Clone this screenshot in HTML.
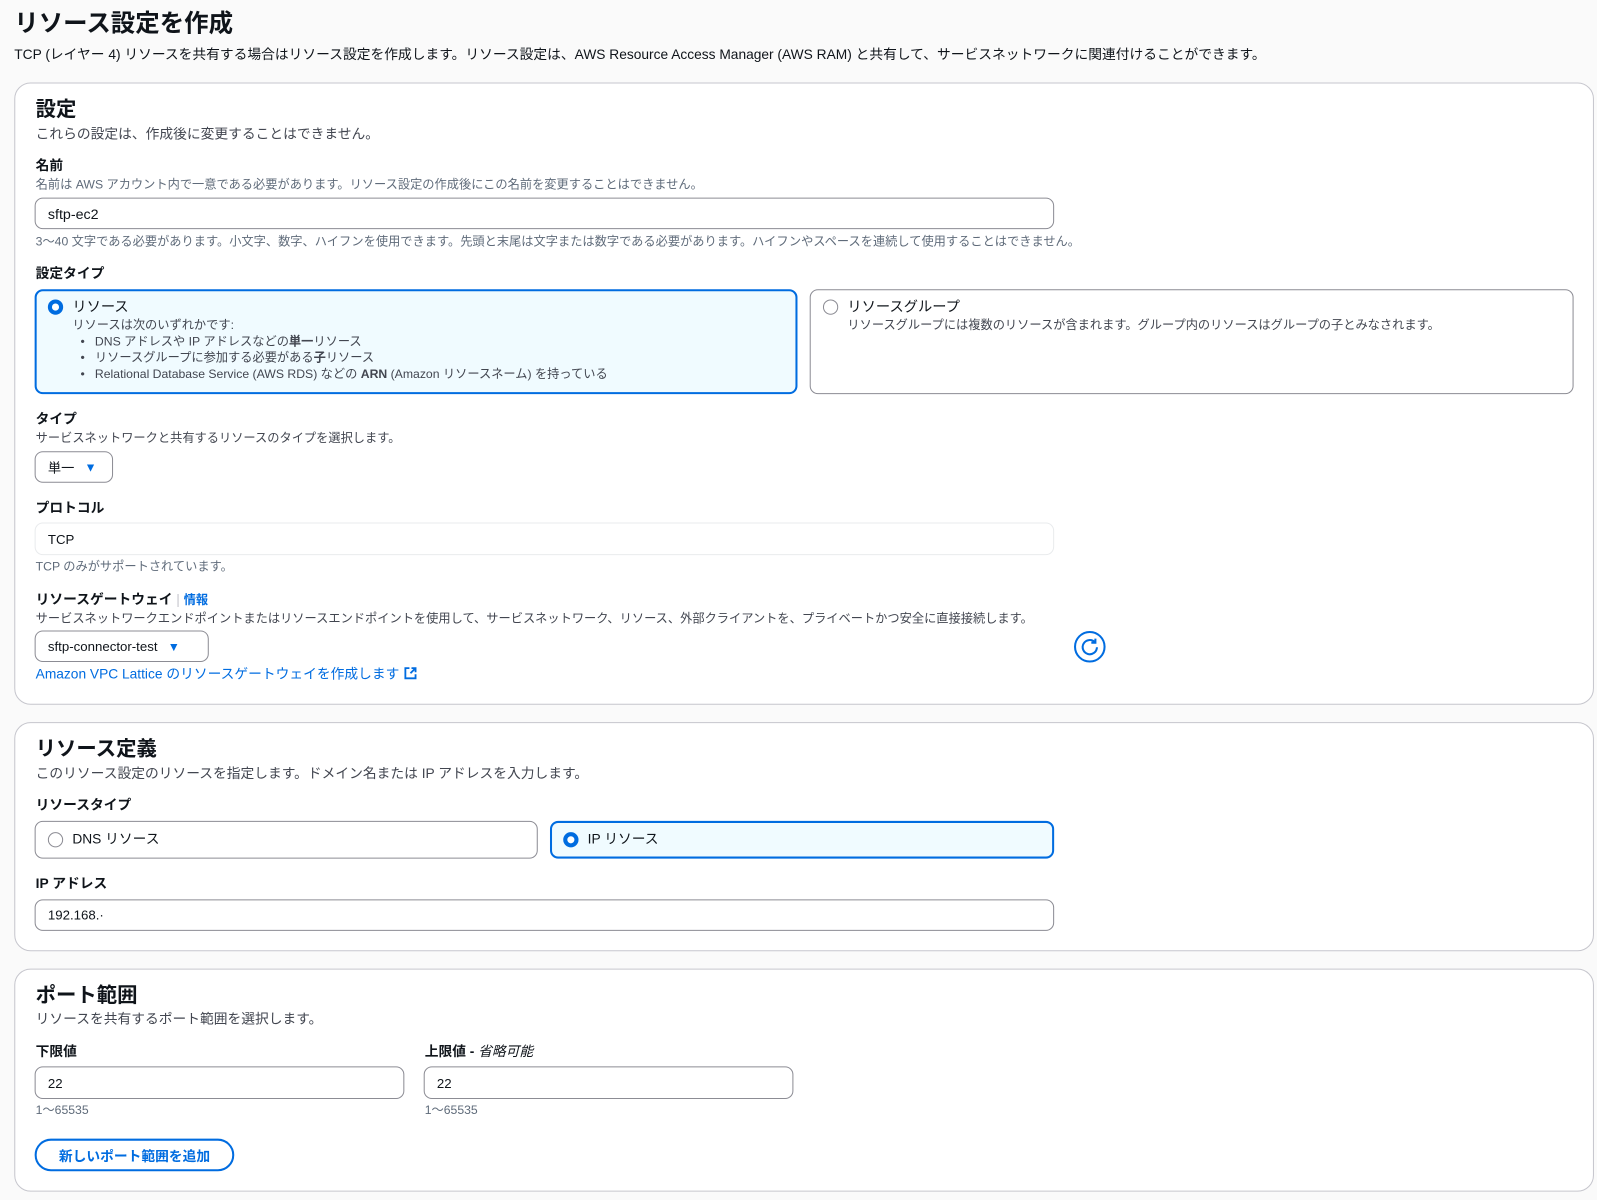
<!DOCTYPE html>
<html><head><meta charset="utf-8"><style>
*{box-sizing:border-box;margin:0;padding:0}
body{width:1597px;height:1199px;background:#fafafa;font-family:"Liberation Sans","Noto Sans CJK JP",sans-serif;color:#0f141a;position:relative;overflow:hidden}
#w{position:absolute;left:0;top:0;width:1568px;height:1178px;transform:scale(1.0185);transform-origin:0 0}
.t{position:absolute;white-space:nowrap;line-height:1.2}
.card{position:absolute;left:14px;width:1551px;background:#fff;border:1px solid #c6c6cd;border-radius:16px}
.h1{font-size:24px;font-weight:bold}
.h2{font-size:20px;font-weight:bold}
.lbl{font-size:13.5px;font-weight:bold}
.d{font-size:13.5px;color:#424650}
.s{font-size:12px;color:#5f6b7a}
.in{position:absolute;background:#fff;border:1px solid #8c8c94;border-radius:8px;font-size:14px;padding-left:12px;display:flex;align-items:center}
.box{position:absolute;border:1px solid #8c8c94;border-radius:8px;background:#fff}
.sel{border:2px solid #006ce0;background:#f0fbff}
.rad{position:absolute;width:15px;height:15px;border-radius:50%;border:1.5px solid #8c8c94;background:#fff}
.rad.on{border:4.5px solid #006ce0}
.blue{color:#006ce0}
</style></head><body><div id="w">
<div class="t h1" style="left:14px;top:10px">リソース設定を作成</div>
<div class="t" style="left:14px;top:46px;font-size:13.5px">TCP (レイヤー 4) リソースを共有する場合はリソース設定を作成します。リソース設定は、AWS Resource Access Manager (AWS RAM) と共有して、サービスネットワークに関連付けることができます。</div>

<div class="card" style="top:81px;height:611px"></div>
<div class="t h2" style="left:35px;top:96px">設定</div>
<div class="t d" style="left:35px;top:124px">これらの設定は、作成後に変更することはできません。</div>
<div class="t lbl" style="left:35px;top:155px">名前</div>
<div class="t s" style="left:35px;top:174px">名前は AWS アカウント内で一意である必要があります。リソース設定の作成後にこの名前を変更することはできません。</div>
<div class="in" style="left:34px;top:194px;width:1001px;height:31px">sftp-ec2</div>
<div class="t s" style="left:35px;top:230px">3〜40 文字である必要があります。小文字、数字、ハイフンを使用できます。先頭と末尾は文字または数字である必要があります。ハイフンやスペースを連続して使用することはできません。</div>
<div class="t lbl" style="left:35px;top:261px">設定タイプ</div>
<div class="box sel" style="left:34px;top:284px;width:749px;height:103px"></div>
<div class="rad on" style="left:47px;top:294px"></div>
<div class="t" style="left:71px;top:293px;font-size:14px">リソース</div>
<div class="t s" style="left:71px;top:312px;color:#424650">リソースは次のいずれかです:</div>
<div class="t s" style="left:79px;top:328px;color:#424650">•&nbsp;&nbsp;&nbsp;DNS アドレスや IP アドレスなどの<b>単一</b>リソース</div>
<div class="t s" style="left:79px;top:344px;color:#424650">•&nbsp;&nbsp;&nbsp;リソースグループに参加する必要がある<b>子</b>リソース</div>
<div class="t s" style="left:79px;top:360px;color:#424650">•&nbsp;&nbsp;&nbsp;Relational Database Service (AWS RDS) などの <b>ARN</b> (Amazon リソースネーム) を持っている</div>
<div class="box" style="left:795px;top:284px;width:750px;height:103px"></div>
<div class="rad" style="left:808px;top:294px"></div>
<div class="t" style="left:832px;top:293px;font-size:14px">リソースグループ</div>
<div class="t s" style="left:832px;top:312px;color:#424650">リソースグループには複数のリソースが含まれます。グループ内のリソースはグループの子とみなされます。</div>
<div class="t lbl" style="left:35px;top:404px">タイプ</div>
<div class="t s" style="left:35px;top:423px;color:#424650">サービスネットワークと共有するリソースのタイプを選択します。</div>
<div class="in" style="left:34px;top:443px;width:77px;height:31px;font-size:13px">単一<span class="blue" style="margin-left:10px;font-size:12px">▼</span></div>
<div class="t lbl" style="left:35px;top:491px">プロトコル</div>
<div class="in" style="left:34px;top:513px;width:1001px;height:32px;border-color:#e9ebed;font-size:13px">TCP</div>
<div class="t s" style="left:35px;top:549px">TCP のみがサポートされています。</div>
<div class="t lbl" style="left:35px;top:581px">リソースゲートウェイ <span style="color:#c6c6cd;font-weight:normal">|</span> <span class="blue" style="font-size:12px">情報</span></div>
<div class="t s" style="left:35px;top:600px;color:#424650">サービスネットワークエンドポイントまたはリソースエンドポイントを使用して、サービスネットワーク、リソース、外部クライアントを、プライベートかつ安全に直接接続します。</div>
<div class="in" style="left:34px;top:619px;width:171px;height:31px;font-size:13px">sftp-connector-test<span class="blue" style="margin-left:10px;font-size:12px">▼</span></div>
<svg style="position:absolute;left:1054px;top:619px" width="32" height="32" viewBox="0 0 32 32"><circle cx="16" cy="16" r="14.5" fill="#fff" stroke="#006ce0" stroke-width="2"/><path d="M21 11.5A7 7 0 1 0 23 16.5" fill="none" stroke="#006ce0" stroke-width="2"/><path d="M21.5 8v4h-4" fill="none" stroke="#006ce0" stroke-width="2"/></svg>
<div class="t blue" style="left:35px;top:654px;font-size:13.5px">Amazon VPC Lattice のリソースゲートウェイを作成します <svg width="14" height="14" viewBox="0 0 14 14" style="vertical-align:-2px"><path d="M6 2H2v10h10V8M8 2h4v4M12 2L7 7" fill="none" stroke="#006ce0" stroke-width="1.8"/></svg></div>

<div class="card" style="top:709px;height:225px"></div>
<div class="t h2" style="left:35px;top:724px">リソース定義</div>
<div class="t d" style="left:35px;top:752px">このリソース設定のリソースを指定します。ドメイン名または IP アドレスを入力します。</div>
<div class="t lbl" style="left:35px;top:783px">リソースタイプ</div>
<div class="box" style="left:34px;top:806px;width:494px;height:37px"></div>
<div class="rad" style="left:47px;top:817px"></div>
<div class="t" style="left:71px;top:816px;font-size:13.5px">DNS リソース</div>
<div class="box sel" style="left:540px;top:806px;width:495px;height:37px"></div>
<div class="rad on" style="left:553px;top:817px"></div>
<div class="t" style="left:577px;top:816px;font-size:13.5px">IP リソース</div>
<div class="t lbl" style="left:35px;top:860px">IP アドレス</div>
<div class="in" style="left:34px;top:883px;width:1001px;height:31px;font-size:13px">192.168.·</div>

<div class="card" style="top:951px;height:219px"></div>
<div class="t h2" style="left:35px;top:966px">ポート範囲</div>
<div class="t d" style="left:35px;top:993px">リソースを共有するポート範囲を選択します。</div>
<div class="t lbl" style="left:35px;top:1025px">下限値</div>
<div class="t lbl" style="left:417px;top:1025px">上限値 - <i style="font-weight:normal">省略可能</i></div>
<div class="in" style="left:34px;top:1047px;width:363px;height:32px;font-size:13px">22</div>
<div class="in" style="left:416px;top:1047px;width:363px;height:32px;font-size:13px">22</div>
<div class="t s" style="left:35px;top:1083px">1〜65535</div>
<div class="t s" style="left:417px;top:1083px">1〜65535</div>
<div style="position:absolute;left:34px;top:1118px;width:196px;height:32px;border:2px solid #006ce0;border-radius:16px;color:#006ce0;font-weight:bold;font-size:13.5px;display:flex;align-items:center;justify-content:center">新しいポート範囲を追加</div>
</div></body></html>
